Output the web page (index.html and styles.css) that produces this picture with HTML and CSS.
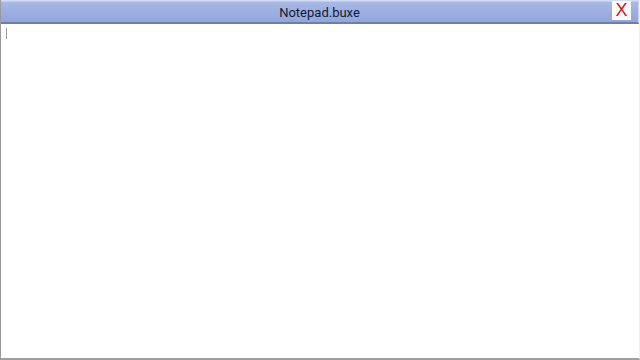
FILE: index.html
```html
<!DOCTYPE html>
<html>
<head>
    <meta charset="utf-8">
    <title>Notepad.buxe</title>
    <link rel="stylesheet" href="styles.css">
</head>
<body>
<div class="window">
    <div class="titlebar">
        <span class="title">Notepad.buxe</span>
        <a href="javascript:;" class="close">X</a>
    </div>
    <div class="editor"><span class="caret"></span></div>
</div>
</body>
</html>
```

FILE: styles.css
```css
*{margin:0;padding:0;box-sizing:border-box;text-decoration:none;}
body{width:640px;height:360px;overflow:hidden;background:#fff;font-family:"Liberation Sans",Arial,sans-serif;}
.window{width:640px;height:360px;display:flex;flex-direction:column;border-left:1px solid #9a9a9a;border-bottom:2px solid #a0a0a0;border-right:1px solid #f0f0f0;}
.titlebar{position:relative;height:24px;display:flex;align-items:center;justify-content:center;background:linear-gradient(#d4ddf5 0,#d4ddf5 1px,#a9b9e6 2px,#9cafe0 12px,#93a7dc 21px);border-bottom:2px solid #6d7ea8;border-right:1px solid #c8d2ee;}
.title{font-family:Roboto,"Liberation Sans",sans-serif;font-size:13px;color:#111a2e;padding-top:2px;}
.close{position:absolute;right:7px;top:1px;width:19px;height:19px;background:#fbfbfb;color:#c81818;font-family:"Liberation Sans",Arial,sans-serif;font-size:18px;line-height:19px;text-align:center;}
.editor{flex:1;background:#fff;padding:3px 5px;}
.caret{display:block;width:1px;height:11px;margin-top:1px;background:#999;}
```
